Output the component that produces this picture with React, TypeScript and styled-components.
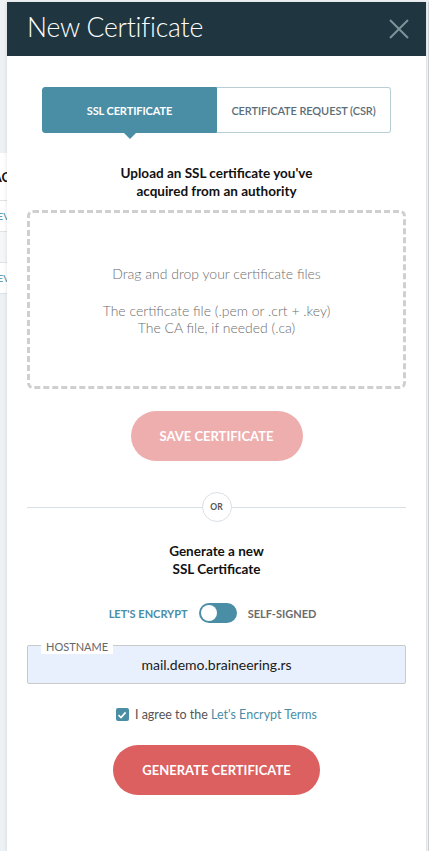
import React, { useState } from "react";
import styled, { createGlobalStyle } from "styled-components";

const GlobalStyle = createGlobalStyle`
  * { box-sizing: border-box; }
  html, body { margin: 0; padding: 0; }
  body {
    font-family: Lato, "Noto Sans", sans-serif;
    background: #eef1f3;
    overflow: hidden;
  }
`;

const Screen = styled.div`
  display: flex;
  height: 851px;
  padding-top: 2px;
  background: #eef1f3;
`;

// the page behind the drawer, only a sliver of it shows
const BackPage = styled.div`
  width: 7px;
  overflow: hidden;
  padding-top: 151px;
  flex-shrink: 0;
`;

const BackRow = styled.div<{ $h: number; $shade?: boolean }>`
  height: ${(p) => p.$h}px;
  width: 60px;
  display: flex;
  align-items: center;
  justify-content: flex-end;
  padding-right: 50px;
  background: ${(p) => (p.$shade ? "#f4f6f8" : "#ffffff")};
  border-bottom: 1px solid #dde3e7;
  font-size: 11px;
`;

const BackLabel = styled.span<{ $bold?: boolean }>`
  font-weight: ${(p) => (p.$bold ? 700 : 400)};
  color: ${(p) => (p.$bold ? "#111" : "#4a8ea6")};
  font-size: ${(p) => (p.$bold ? 13 : 10)}px;
  white-space: nowrap;
`;

const Panel = styled.div`
  width: 419px;
  flex-shrink: 0;
  background: #ffffff;
  display: flex;
  flex-direction: column;
  box-shadow: -1px 0 3px rgba(0, 0, 0, 0.08);
`;

const ScrollEdge = styled.div`
  flex: 1;
  background: #eef1f3;
  border-left: 1px solid #e2e6e9;
  border-right: 1px solid #c9cfd3;
`;

const Header = styled.div`
  height: 54px;
  background: #1f3640;
  display: flex;
  align-items: center;
  justify-content: space-between;
  padding: 0 16px 0 20px;
  flex-shrink: 0;
`;

const Title = styled.h1`
  margin: 0;
  color: #ffffff;
  font-family: Lato, sans-serif;
  font-weight: 300;
  font-size: 26.5px;
  letter-spacing: -0.2px;
  line-height: 1;
  padding-bottom: 3px;
`;

const CloseBtn = styled.button`
  border: none;
  background: transparent;
  padding: 0;
  width: 22px;
  height: 22px;
  display: flex;
  align-items: center;
  justify-content: center;
  cursor: pointer;
`;

const Body = styled.div`
  display: flex;
  flex-direction: column;
  align-items: center;
  padding: 31px 20px 0;
`;

const Tabs = styled.div`
  display: flex;
  width: 349px;
  height: 46px;
`;

const Tab = styled.button<{ $active?: boolean }>`
  position: relative;
  flex: 1;
  border: 1px solid ${(p) => (p.$active ? "#4a8ea6" : "#b9cdd5")};
  border-left-width: ${(p) => (p.$active ? 1 : 0)}px;
  border-radius: ${(p) => (p.$active ? "3px 0 0 3px" : "0 3px 3px 0")};
  background: ${(p) => (p.$active ? "#4a8ea6" : "#ffffff")};
  color: ${(p) => (p.$active ? "#ffffff" : "#5b6d76")};
  font-family: Lato, sans-serif;
  font-weight: ${(p) => (p.$active ? 700 : 600)};
  font-size: 11px;
  letter-spacing: -0.1px;
  padding: 0;
  cursor: pointer;
  &::after {
    content: "";
    display: ${(p) => (p.$active ? "block" : "none")};
    position: absolute;
    left: 50%;
    bottom: -7px;
    margin-left: -6px;
    border-left: 6px solid transparent;
    border-right: 6px solid transparent;
    border-top: 6px solid #4a8ea6;
  }
`;

const Heading = styled.p`
  margin: 31px 0 0;
  text-align: center;
  font-weight: 700;
  font-size: 13.5px;
  line-height: 18px;
  color: #111;
`;

const DropZone = styled.div`
  margin-top: 10px;
  width: 100%;
  height: 179px;
  border: 3px dashed #cfcfcf;
  border-radius: 6px;
  display: flex;
  flex-direction: column;
  align-items: center;
  justify-content: center;
  padding-top: 2px;
  color: #6e6e6e;
  font-weight: 300;
  font-size: 14px;
  line-height: 17px;
  text-align: center;
`;

const DropLine = styled.div<{ $gap?: number }>`
  margin-top: ${(p) => p.$gap || 0}px;
`;

const PillButton = styled.button<{ $muted?: boolean; $w: number; $top: number }>`
  margin-top: ${(p) => p.$top}px;
  width: ${(p) => p.$w}px;
  height: 50px;
  border: none;
  border-radius: 25px;
  background: ${(p) => (p.$muted ? "#eeaeae" : "#dc6060")};
  color: #ffffff;
  font-family: Lato, sans-serif;
  font-weight: 700;
  font-size: 13px;
  cursor: pointer;
`;

const Divider = styled.div`
  margin-top: 31px;
  width: 100%;
  display: flex;
  align-items: center;
  &::before,
  &::after {
    content: "";
    flex: 1;
    height: 1px;
    background: #d9e0e4;
  }
`;

const OrBadge = styled.span`
  width: 30px;
  height: 30px;
  border-radius: 50%;
  border: 1px solid #d9e0e4;
  display: flex;
  align-items: center;
  justify-content: center;
  font-size: 8.5px;
  font-weight: 700;
  color: #555;
`;

const SubHeading = styled(Heading)`
  margin-top: 20px;
`;

const ToggleRow = styled.div`
  margin-top: 25px;
  display: flex;
  align-items: center;
  gap: 11px;
  margin-right: 8px;
`;

const ToggleLabel = styled.span<{ $on?: boolean }>`
  font-weight: 700;
  font-size: 11px;
  color: ${(p) => (p.$on ? "#4a8ea6" : "#6b6b6b")};
`;

const Switch = styled.button<{ $right: boolean }>`
  width: 38px;
  height: 20px;
  border-radius: 10px;
  border: none;
  padding: 2px;
  background: #4a8ea6;
  display: flex;
  justify-content: ${(p) => (p.$right ? "flex-end" : "flex-start")};
  cursor: pointer;
`;

const Knob = styled.span`
  width: 16px;
  height: 16px;
  border-radius: 50%;
  background: #ffffff;
`;

const Field = styled.label`
  position: relative;
  margin-top: 22px;
  width: 100%;
  height: 39px;
  display: flex;
`;

const FieldLabel = styled.span`
  position: absolute;
  left: 14px;
  top: -6px;
  padding: 0 5px;
  background: #ffffff;
  color: #666;
  font-size: 11px;
  line-height: 15px;
`;

const FieldInput = styled.input`
  width: 100%;
  height: 100%;
  border: 1px solid #c9c9c9;
  border-radius: 2px;
  background: #e8f0fd;
  text-align: center;
  font-family: Lato, sans-serif;
  font-size: 14px;
  color: #1a1a1a;
  padding: 0 0 0;
  outline: none;
`;

const AgreeRow = styled.label`
  margin-top: 23px;
  display: flex;
  align-items: center;
  gap: 6px;
  font-size: 12.5px;
  color: #555;
  cursor: pointer;
`;

const Check = styled.span`
  width: 13px;
  height: 13px;
  border-radius: 2px;
  background: #4a8ea6;
  display: flex;
  align-items: center;
  justify-content: center;
`;

const TermsLink = styled.a`
  color: #4a8ea6;
  text-decoration: none;
`;

export default function App() {
  const [selfSigned, setSelfSigned] = useState(false);
  const [host, setHost] = useState("mail.demo.braineering.rs");

  return (
    <>
      <GlobalStyle />
      <Screen>
        <BackPage>
          <BackRow $h={48}>
            <BackLabel $bold>AC</BackLabel>
          </BackRow>
          <BackRow $h={31}>
            <BackLabel>EV</BackLabel>
          </BackRow>
          <BackRow $h={31} $shade />
          <BackRow $h={31}>
            <BackLabel>EV</BackLabel>
          </BackRow>
        </BackPage>
        <Panel>
          <Header>
            <Title>New Certificate</Title>
            <CloseBtn aria-label="Close">
              <svg width="20" height="20" viewBox="0 0 20 20">
                <path d="M1 1 L19 19 M19 1 L1 19" stroke="#7e9399" strokeWidth="2" fill="none" />
              </svg>
            </CloseBtn>
          </Header>
          <Body>
            <Tabs>
              <Tab $active>SSL CERTIFICATE</Tab>
              <Tab>CERTIFICATE REQUEST (CSR)</Tab>
            </Tabs>
            <Heading>
              Upload an SSL certificate you've
              <br />
              acquired from an authority
            </Heading>
            <DropZone>
              <DropLine>Drag and drop your certificate files</DropLine>
              <DropLine $gap={20}>The certificate file (.pem or .crt + .key)</DropLine>
              <DropLine>The CA file, if needed (.ca)</DropLine>
            </DropZone>
            <PillButton $muted $w={172} $top={22}>
              SAVE CERTIFICATE
            </PillButton>
            <Divider>
              <OrBadge>OR</OrBadge>
            </Divider>
            <SubHeading>
              Generate a new
              <br />
              SSL Certificate
            </SubHeading>
            <ToggleRow>
              <ToggleLabel $on={!selfSigned}>LET'S ENCRYPT</ToggleLabel>
              <Switch $right={selfSigned} onClick={() => setSelfSigned(!selfSigned)}>
                <Knob />
              </Switch>
              <ToggleLabel $on={selfSigned}>SELF-SIGNED</ToggleLabel>
            </ToggleRow>
            <Field>
              <FieldLabel>HOSTNAME</FieldLabel>
              <FieldInput value={host} onChange={(e) => setHost(e.target.value)} />
            </Field>
            <AgreeRow>
              <Check>
                <svg width="10" height="10" viewBox="0 0 10 10">
                  <path d="M1.5 5.2 L4 7.6 L8.6 2.4" stroke="#fff" strokeWidth="1.6" fill="none" />
                </svg>
              </Check>
              <span>
                I agree to the <TermsLink href="#">Let's Encrypt Terms</TermsLink>
              </span>
            </AgreeRow>
            <PillButton $w={207} $top={23}>
              GENERATE CERTIFICATE
            </PillButton>
          </Body>
        </Panel>
        <ScrollEdge />
      </Screen>
    </>
  );
}
